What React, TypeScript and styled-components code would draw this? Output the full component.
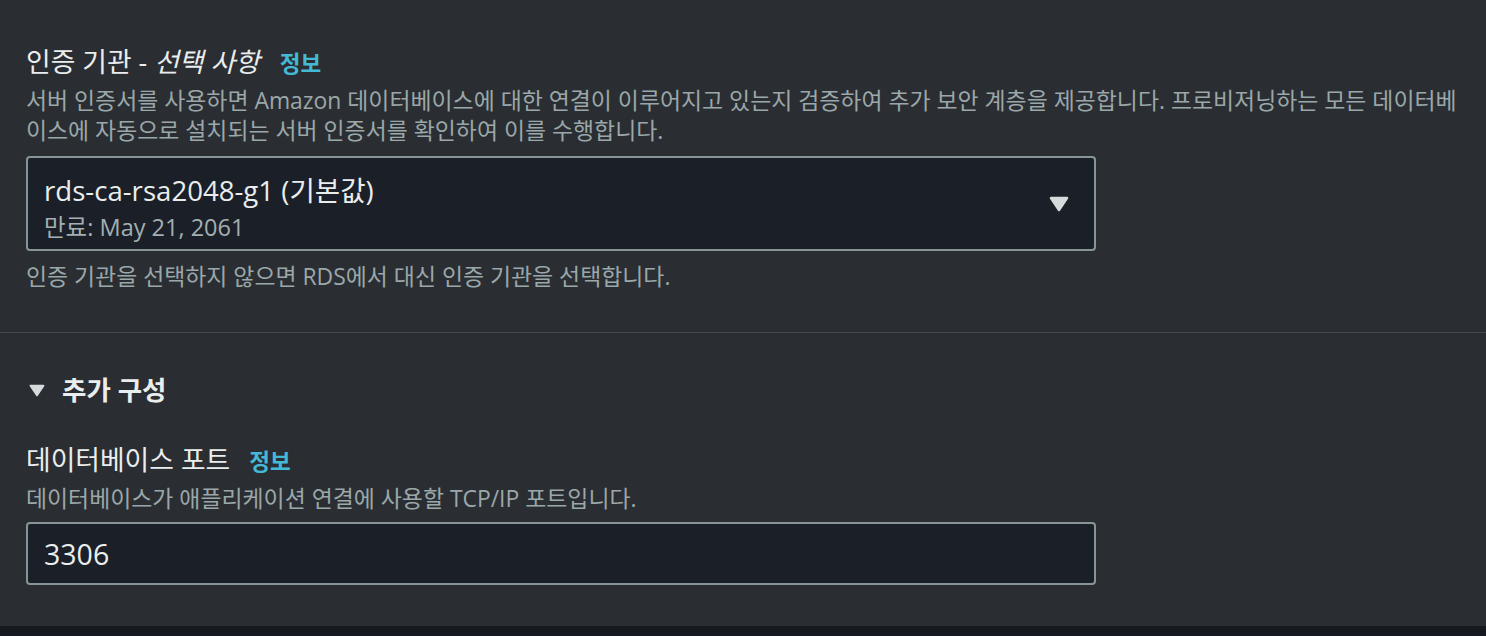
import React from 'react'
import styled, { createGlobalStyle } from 'styled-components'

const GlobalStyle = createGlobalStyle`
   html, body {
      margin: 0;
      padding: 0;
      background: #16191f;
   }
   body {
      font-family: 'Open Sans', 'Noto Sans CJK KR', sans-serif;
      -webkit-font-smoothing: antialiased;
   }
`

const Panel = styled.div`
   background: #2a2e33;
   color: #eaeded;
`

const Section = styled.section<{ $top: number; $bottom: number; $divided?: boolean }>`
   padding: ${(p) => p.$top}px 20px ${(p) => p.$bottom}px 26px;
   border-top: ${(p) => (p.$divided ? '1px solid #444a52' : 'none')};
`

const Label = styled.div`
   display: flex;
   align-items: baseline;
   gap: 19px;
   height: 30px;
   font-size: 26.8px;
   line-height: 30px;
   color: #eaeded;
   i {
      font-style: italic;
      padding-right: 1px;
   }
`

const InfoLink = styled.a`
   font-size: 22.5px;
   font-weight: 700;
   color: #44b9d6;
   text-decoration: none;
   cursor: pointer;
`

const Description = styled.p<{ $gap?: number }>`
   margin: ${(p) => p.$gap ?? 9}px 0 0;
   font-size: 22.9px;
   line-height: 30px;
   color: #9ba7a8;
`

const Select = styled.div`
   box-sizing: border-box;
   display: flex;
   align-items: center;
   justify-content: space-between;
   width: 1070px;
   height: 95px;
   margin-top: 10px;
   padding: 0 25px 0 16px;
   background: #1b2028;
   border: 2px solid #879596;
   border-radius: 4px;
`

const SelectText = styled.div`
   padding-top: 10px;
`

const SelectMain = styled.div`
   font-size: 27.6px;
   line-height: 30px;
   color: #eaeded;
`

const SelectSub = styled.div`
   margin-top: 7px;
   font-size: 23.5px;
   line-height: 30px;
   color: #a3afb0;
`

const Heading = styled.div`
   display: flex;
   align-items: center;
   gap: 17px;
   height: 32px;
   padding-left: 3px;
   font-size: 26.5px;
   font-weight: 700;
   line-height: 32px;
   color: #eaeded;
`

const Field = styled.div`
   margin-top: 39px;
`

const Input = styled.input`
   box-sizing: border-box;
   display: block;
   width: 1070px;
   height: 63px;
   margin-top: 8px;
   padding: 0 16px;
   background: #1b2028;
   border: 2px solid #879596;
   border-radius: 4px;
   font-family: inherit;
   font-size: 28.5px;
   color: #eaeded;
   outline: none;
`

const Caret = ({ w, h }: { w: number; h: number }) => (
   <svg width={w} height={h} viewBox="0 0 20 16" aria-hidden>
      <polygon
         points="2,2 18,2 10,14"
         fill="#d5dbdb"
         stroke="#d5dbdb"
         strokeWidth={2.5}
         strokeLinejoin="round"
      />
   </svg>
)

export default function App() {
   return (
      <>
         <GlobalStyle />
         <Panel>
            <Section $top={47} $bottom={40}>
               <Label>
                  <span>
                     인증 기관 - <i>선택 사항</i>
                  </span>
                  <InfoLink>정보</InfoLink>
               </Label>
               <Description>
                  서버 인증서를 사용하면 Amazon 데이터베이스에 대한 연결이 이루어지고 있는지 검증하여 추가 보안
                  계층을 제공합니다. 프로비저닝하는 모든 데이터베이스에 자동으로 설치되는 서버 인증서를 확인하여 이를
                  수행합니다.
               </Description>
               <Select>
                  <SelectText>
                     <SelectMain>rds-ca-rsa2048-g1 (기본값)</SelectMain>
                     <SelectSub>만료: May 21, 2061</SelectSub>
                  </SelectText>
                  <Caret w={20} h={16} />
               </Select>
               <Description $gap={11}>인증 기관을 선택하지 않으면 RDS에서 대신 인증 기관을 선택합니다.</Description>
            </Section>
            <Section $top={41} $bottom={41} $divided>
               <Heading>
                  <Caret w={16} h={13} />
                  추가 구성
               </Heading>
               <Field>
                  <Label>
                     <span>데이터베이스 포트</span>
                     <InfoLink>정보</InfoLink>
                  </Label>
                  <Description $gap={9}>데이터베이스가 애플리케이션 연결에 사용할 TCP/IP 포트입니다.</Description>
                  <Input readOnly value="3306" />
               </Field>
            </Section>
         </Panel>
      </>
   )
}
